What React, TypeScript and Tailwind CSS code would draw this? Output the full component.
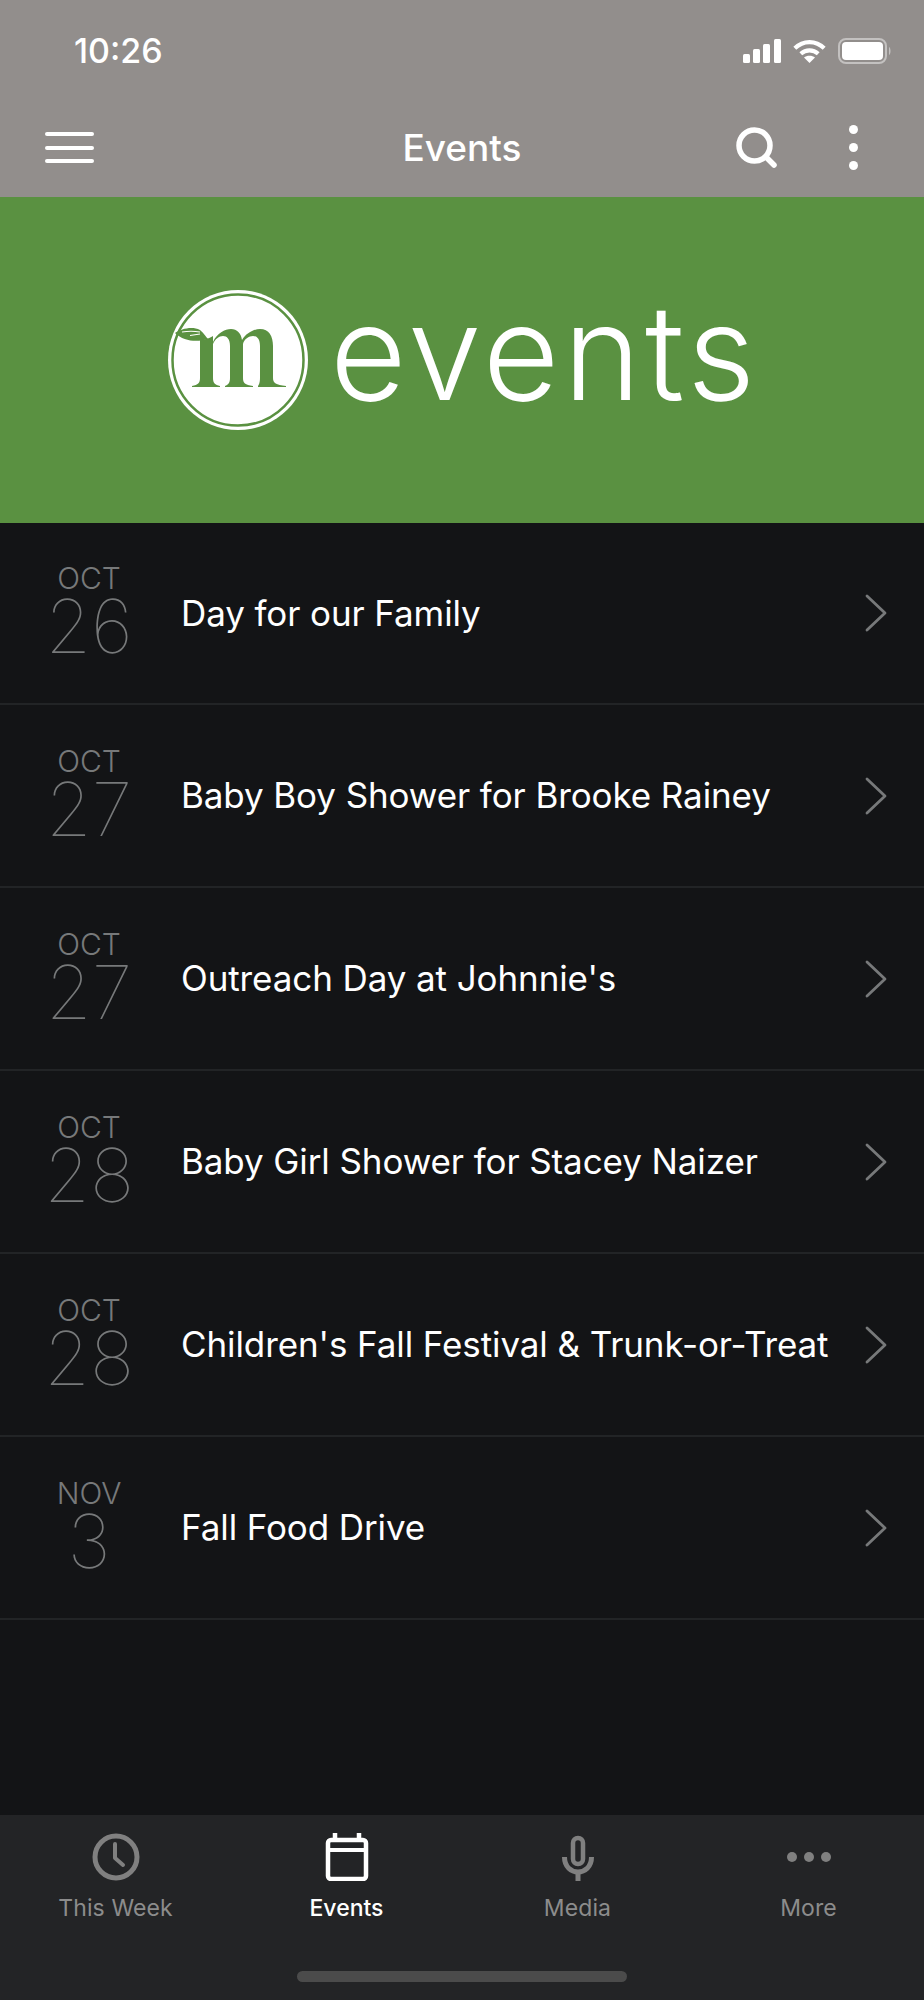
const events = [
  { month: 'OCT', day: '26', title: 'Day for our Family' },
  { month: 'OCT', day: '27', title: 'Baby Boy Shower for Brooke Rainey' },
  { month: 'OCT', day: '27', title: "Outreach Day at Johnnie's" },
  { month: 'OCT', day: '28', title: 'Baby Girl Shower for Stacey Naizer' },
  { month: 'OCT', day: '28', title: "Children's Fall Festival & Trunk-or-Treat" },
  { month: 'NOV', day: '3', title: 'Fall Food Drive' },
];

function StatusBar() {
  return (
    <div className="flex h-[98px] items-start justify-between pl-[74px] pr-[32px] pt-[31px]">
      <span className="text-[34px] font-medium leading-[40px] text-white">10:26</span>
      <div className="flex h-[40px] items-center gap-[12px]">
        <svg width="38" height="24" viewBox="0 0 38 24" fill="white">
          <rect x="0" y="15" width="7" height="9" rx="1.5" />
          <rect x="10" y="10" width="7" height="14" rx="1.5" />
          <rect x="20" y="5" width="7" height="19" rx="1.5" />
          <rect x="31" y="0" width="7" height="24" rx="1.5" />
        </svg>
        <svg width="33" height="25" viewBox="0 0 36 25" fill="none" stroke="white" strokeWidth="4.5">
          <path d="M2 9 C11 0 25 0 34 9" />
          <path d="M8.5 15 C14 10 22 10 27.5 15" />
          <path d="M18 25 L12 19 C15 16.5 21 16.5 24 19 Z" fill="white" stroke="none" />
        </svg>
        <svg width="54" height="26" viewBox="0 0 54 26" fill="none">
          <rect x="1" y="1" width="47" height="24" rx="7" stroke="white" strokeOpacity="0.45" strokeWidth="2" />
          <rect x="4" y="4" width="41" height="18" rx="4" fill="white" />
          <path d="M51 9 C53 10 53 16 51 17 Z" fill="white" fillOpacity="0.45" />
        </svg>
      </div>
    </div>
  );
}

function NavBar() {
  return (
    <div className="grid h-[99px] grid-cols-3 items-center pl-[45px] pr-[66px]">
      <div className="flex h-[31px] w-[49px] flex-col justify-between">
        <div className="h-[4px] rounded-full bg-white" />
        <div className="h-[4px] rounded-full bg-white" />
        <div className="h-[4px] rounded-full bg-white" />
      </div>
      <span className="ml-[21px] text-center text-[37px] font-medium text-white">Events</span>
      <div className="flex items-center justify-end gap-[72px]">
        <svg width="41" height="41" viewBox="0 0 41 41" fill="none" stroke="white" strokeWidth="5.5" strokeLinecap="round">
          <circle cx="18.5" cy="18.5" r="15.5" />
          <path d="M30 30 L38 38" />
        </svg>
        <div className="flex h-[45px] w-[9px] flex-col justify-between">
          <div className="h-[9px] rounded-full bg-white" />
          <div className="h-[9px] rounded-full bg-white" />
          <div className="h-[9px] rounded-full bg-white" />
        </div>
      </div>
    </div>
  );
}

function Logo() {
  return (
    <svg width="140" height="140" viewBox="0 0 140 140">
      <circle cx="70" cy="70" r="70" fill="white" />
      <circle cx="70" cy="70" r="65.5" fill="none" stroke="#5a9141" strokeWidth="2.5" />
      <g fill="#5a9141">
        <path d="M7 43 C13 39 24 36 32 40 C36 43 38 47 40 49 C30 52 16 52 7 43 Z" />
        <path d="M32 50 C36 50 42 48 45 46 L45 52 C49 43 57 39 63 39 C69 39 73 43 74 50 C78 43 86 39 92 39 C101 39 105 46 105 56 L105 88 C105 93 108 95 118 96 L118 97 L90 97 L90 96 C90 96 92 94 92 88 L92 56 C92 49 89 46 85 46 C81 46 76 49 75 54 L75 88 C75 93 77 95 85 96 L85 97 L57 97 L57 96 C60 95 62 93 62 88 L62 56 C62 49 59 46 55 46 C51 46 47 49 45 54 L45 88 C45 93 47 95 52 96 L52 97 L24 97 L24 96 C30 95 32 93 32 88 Z" />
      </g>
      <path d="M14 42 C20 41 26 41 32 42 M22 45.5 L32 44" fill="none" stroke="white" strokeWidth="1.2" />
    </svg>
  );
}

function EventRow({ month, day, title }: { month: string; day: string; title: string }) {
  return (
    <div className="flex h-[183px] items-center border-b-2 border-[#222426] pr-[37px] first:h-[182px]">
      <div className="flex w-[181px] shrink-0 flex-col items-center pb-[4px] pr-[3px] text-[#77797a]">
        <span className="text-[30px] font-light leading-[30px]">{month}</span>
        <span className="text-[74px] font-thin leading-[66px]">{day}</span>
      </div>
      <span className="flex-1 whitespace-nowrap text-[35px] leading-none tracking-[-0.1px] text-white">{title}</span>
      <svg width="22" height="38" viewBox="0 0 22 38" fill="none" stroke="#77797a" strokeWidth="2.8" strokeLinecap="round" strokeLinejoin="round">
        <path d="M2 2 L20 19 L2 36" />
      </svg>
    </div>
  );
}

function TabBar() {
  const grey = '#808080';
  return (
    <div className="grid h-[185px] grid-cols-4 bg-[#232426]">
      <div className="flex flex-col items-center pt-[18px]">
        <svg width="48" height="48" viewBox="0 0 48 48" fill="none" stroke={grey} strokeWidth="5">
          <circle cx="24" cy="24" r="21" />
          <path d="M23 11 V25 L31 32" strokeLinecap="round" strokeLinejoin="round" strokeWidth="4" />
        </svg>
        <span className="mt-[10px] text-[23px] tracking-[0.1px] text-[#8c8c8c]">This Week</span>
      </div>
      <div className="flex flex-col items-center pt-[18px]">
        <svg width="48" height="48" viewBox="0 0 48 48" fill="none" stroke="white">
          <rect x="5" y="7" width="38" height="39" rx="3" strokeWidth="4.5" />
          <path d="M5 17 H43" strokeWidth="4" />
          <path d="M12 0 V7 M36 0 V7" strokeWidth="4.5" />
        </svg>
        <span className="mt-[10px] text-[23px] font-medium text-white">Events</span>
      </div>
      <div className="flex flex-col items-center pt-[18px]">
        <svg width="48" height="48" viewBox="0 0 48 48" fill="none" stroke={grey} strokeWidth="5">
          <rect x="19" y="5" width="10" height="26" rx="5" strokeWidth="4.5" />
          <path d="M10.5 24 C10.5 44 37.5 44 37.5 24" />
          <path d="M24 38 V48" />
        </svg>
        <span className="mt-[10px] text-[23px] tracking-[0.1px] text-[#8c8c8c]">Media</span>
      </div>
      <div className="flex flex-col items-center pt-[18px]">
        <div className="flex h-[48px] items-center gap-[7px]">
          <div className="h-[10px] w-[10px] rounded-full bg-[#808080]" />
          <div className="h-[10px] w-[10px] rounded-full bg-[#808080]" />
          <div className="h-[10px] w-[10px] rounded-full bg-[#808080]" />
        </div>
        <span className="mt-[10px] text-[23px] tracking-[0.1px] text-[#8c8c8c]">More</span>
      </div>
    </div>
  );
}

export default function App() {
  return (
    <div className="relative flex h-[2000px] w-[924px] flex-col bg-[#131416] font-['Inter',sans-serif]">
      <header className="bg-[#928e8c]">
        <StatusBar />
        <NavBar />
      </header>
      <div className="flex h-[326px] items-center gap-[22px] bg-[#5a9141] pl-[168px]">
        <Logo />
        <span className="mb-[16px] text-[132px] font-light leading-none tracking-[4px] text-white">events</span>
      </div>
      <div className="flex-1">
        {events.map((e, i) => (
          <EventRow key={i} {...e} />
        ))}
      </div>
      <TabBar />
      <div className="absolute bottom-[18px] left-[297px] h-[11px] w-[330px] rounded-full bg-[#4b4b4b]" />
    </div>
  );
}
